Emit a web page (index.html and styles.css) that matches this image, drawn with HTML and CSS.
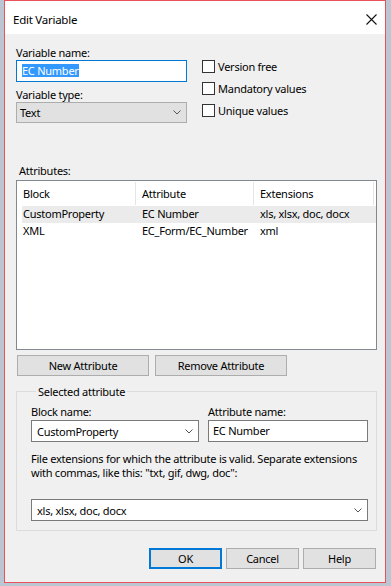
FILE: index.html
```html
<!DOCTYPE html>
<html lang="en">
<head>
  <meta charset="UTF-8">
  <title>Edit Variable</title>
  <link rel="stylesheet" href="styles.css">
</head>
<body>

<!-- DIALOG WINDOW -->
<div class="dialog">

  <!-- TITLE BAR -->
  <div class="titlebar">
    <span class="title">Edit Variable</span>
    <svg class="close" width="11" height="11" viewBox="0 0 11 11">
      <path d="M0.5 0.5 L10.5 10.5 M10.5 0.5 L0.5 10.5" stroke="#111" stroke-width="1.1" fill="none"/>
    </svg>
  </div>

  <div class="content">

    <!-- NAME / TYPE AND OPTIONS -->
    <div class="top">
      <div class="fields">
        <div class="lbl">Variable name:</div>
        <div class="textbox focused"><span class="sel">EC Number</span></div>
        <div class="lbl spaced">Variable type:</div>
        <div class="combo readonly">
          <span>Text</span>
          <svg class="chev" width="8" height="5" viewBox="0 0 8 5"><path d="M0.5 0.5 L4 4 L7.5 0.5" stroke="#555" fill="none"/></svg>
        </div>
      </div>
      <div class="checks">
        <div class="check"><span class="box"></span>Version free</div>
        <div class="check"><span class="box"></span>Mandatory values</div>
        <div class="check"><span class="box"></span>Unique values</div>
      </div>
    </div>

    <!-- ATTRIBUTES LIST -->
    <div class="lbl attrs-lbl">Attributes:</div>
    <div class="listview">
      <div class="lv-head">
        <div class="cell">Block</div>
        <div class="cell">Attribute</div>
        <div class="cell">Extensions</div>
      </div>
      <div class="lv-row selected">
        <div class="cell">CustomProperty</div>
        <div class="cell">EC Number</div>
        <div class="cell">xls, xlsx, doc, docx</div>
      </div>
      <div class="lv-row">
        <div class="cell">XML</div>
        <div class="cell">EC_Form/EC_Number</div>
        <div class="cell">xml</div>
      </div>
    </div>

    <div class="btn-row">
      <button class="btn wide">New Attribute</button>
      <button class="btn wide">Remove Attribute</button>
    </div>

    <!-- SELECTED ATTRIBUTE GROUP -->
    <fieldset class="group">
      <legend>Selected attribute</legend>
      <div class="pair">
        <div>
          <div class="lbl">Block name:</div>
          <div class="combo">
            <span>CustomProperty</span>
            <svg class="chev" width="8" height="5" viewBox="0 0 8 5"><path d="M0.5 0.5 L4 4 L7.5 0.5" stroke="#555" fill="none"/></svg>
          </div>
        </div>
        <div>
          <div class="lbl">Attribute name:</div>
          <div class="textbox">EC Number</div>
        </div>
      </div>
      <p class="hint">File extensions for which the attribute is valid. Separate extensions<br>with commas, like this: "txt, gif, dwg, doc":</p>
      <div class="combo">
        <span>xls, xlsx, doc, docx</span>
        <svg class="chev" width="8" height="5" viewBox="0 0 8 5"><path d="M0.5 0.5 L4 4 L7.5 0.5" stroke="#555" fill="none"/></svg>
      </div>
    </fieldset>

    <!-- DIALOG BUTTONS -->
    <div class="footer">
      <button class="btn default">OK</button>
      <button class="btn">Cancel</button>
      <button class="btn">Help</button>
    </div>

  </div>
</div>

</body>
</html>
```

FILE: styles.css
```css
/* --- Page --- */
body {
  margin: 0; height: 586px; overflow: hidden; background: #bcc6d3;
  font-family: "Noto Sans", sans-serif; font-size: 11px; letter-spacing: -0.25px; color: #000;
}

/* --- Window frame --- */
.dialog {
  margin-left: 4px; width: 382px; height: 583px; box-sizing: border-box;
  border: 1px solid #e8535b; background: #f0f0f0;
}
.titlebar {
  height: 33px; box-sizing: border-box; padding: 3px 8px 0 8px;
  background: #fff; display: flex; align-items: center; justify-content: space-between;
}
.title { font-size: 11.5px; }
.content { padding: 11px 8px 0 11px; }

/* --- Common controls --- */
.lbl { height: 15px; line-height: 15px; white-space: nowrap; }
.lbl.spaced { margin-top: 5px; }

.textbox {
  height: 22px; box-sizing: border-box; border: 1px solid #7a7a7a; background: #fff;
  padding-left: 4px; line-height: 20px; white-space: nowrap;
}
.textbox.focused { border-color: #0078d7; padding-left: 5px; }
.sel { background: #3399ff; color: #fff; display: inline-block; line-height: 12px; padding-top: 1px; }

.combo {
  height: 22px; box-sizing: border-box; border: 1px solid #7a7a7a; background: #fff;
  display: flex; align-items: center; justify-content: space-between; padding: 0 5px 0 5px;
  white-space: nowrap;
}
.combo.readonly { height: 21px; background: #e1e1e1; border-color: #adadad; padding-left: 3px; }

.btn {
  height: 21px; box-sizing: border-box; border: 1px solid #adadad; background: #e1e1e1;
  font: inherit; letter-spacing: inherit; color: #000; padding: 0; margin: 0; line-height: 18px;
}
.btn.default { border: 2px solid #0078d7; }

/* --- Top section --- */
.top { display: grid; grid-template-columns: 171px 1fr; column-gap: 15px; }
.checks { padding-top: 14px; }
.check { height: 22px; display: flex; align-items: flex-start; line-height: 15px; white-space: nowrap; }
.box { width: 13px; height: 13px; box-sizing: border-box; border: 1px solid #333; background: #fff; margin: 1px 3px 0 0; flex: none; }

/* --- Attributes list --- */
.attrs-lbl { margin-top: 38px; padding-left: 3px; }
.listview {
  margin-top: 2px; height: 170px; box-sizing: border-box;
  border: 1px solid #828790; background: #fff; padding-left: 5px;
}
.lv-head, .lv-row { display: grid; grid-template-columns: 114px 118px 120px; white-space: nowrap; }
.lv-head { height: 25px; line-height: 23px; }
.lv-head .cell { border-right: 1px solid #e5e5e5; height: 23px; margin-top: 1px; }
.lv-row { height: 17px; line-height: 16px; }
.lv-row.selected { background: #ebebeb; }
.cell { padding-left: 6px; overflow: hidden; }
.cell:first-child { padding-left: 1px; }

.btn-row { display: flex; gap: 6px; margin: 5px 0 0 1px; }
.btn.wide { width: 132px; }

/* --- Selected attribute group --- */
.group {
  margin: 8px 0 0 0; padding: 5px 8px 9px 14px;
  border: 1px solid #dcdcdc; min-width: 0;
}
.group legend { padding: 0 2px; margin-left: 5px; line-height: 15px; }
.pair { display: grid; grid-template-columns: 168px 1fr; column-gap: 9px; }
.pair .combo, .pair .textbox { margin-top: 1px; }
.hint { margin: 10px 0 19px 0; line-height: 14px; white-space: nowrap; }

/* --- Footer --- */
.footer { display: flex; justify-content: flex-end; gap: 4px; margin: 17px 1px 0 0; }
.footer .btn { width: 73px; }
```
